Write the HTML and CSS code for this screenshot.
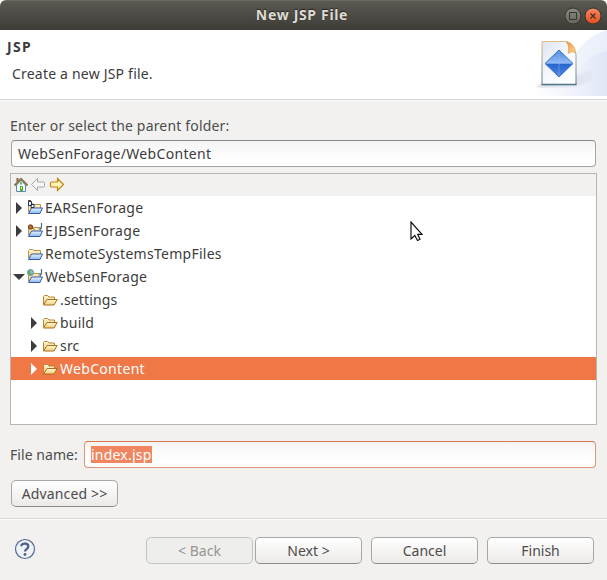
FILE: index.html
```html
<!DOCTYPE html>
<html lang="en">
<head>
<meta charset="utf-8">
<title>New JSP File</title>
<link rel="stylesheet" href="styles.css">
</head>
<body>
<svg class="defs" aria-hidden="true">
  <defs>
    <linearGradient id="yellow" x2="0" y2="1"><stop stop-color="#fff8d8"/><stop offset="1" stop-color="#f3cd75"/></linearGradient>
    <linearGradient id="blue" x2="0" y2="1"><stop stop-color="#eef6ff"/><stop offset="1" stop-color="#83b6ed"/></linearGradient>
    <symbol id="folder" viewBox="0 0 16 16">
      <path d="M1.500 12V4.500l1-1h3L7 5h5.500v3" fill="url(#yellow)" stroke="#b9852f"/>
      <path d="M1.500 13 5 7.500h10.200L12 13z" fill="url(#yellow)" stroke="#aa6f22"/>
    </symbol>
    <symbol id="project" viewBox="0 0 16 16">
      <path d="M1.500 12V4.500l1-1h3L7 4.500h6.500V8" fill="url(#yellow)" stroke="#b9954a"/>
      <path d="M1.500 13.500 4.500 8h11l-2.500 5.500z" fill="url(#blue)" stroke="#3659a8"/>
    </symbol>
    <symbol id="right" viewBox="0 0 6 12"><path d="M0 0l6 6-6 6z" fill="currentColor"/></symbol>
    <symbol id="down" viewBox="0 0 12 6"><path d="M0 0h12L6 6z" fill="currentColor"/></symbol>
  </defs>
</svg>
<main class="window">
  <header class="titlebar">
    <h1 class="title">New JSP File</h1>
    <div class="controls">
      <svg width="36" height="18" viewBox="0 0 36 18">
        <defs><linearGradient id="close" x2="0" y2="1"><stop stop-color="#f68b65"/><stop offset="1" stop-color="#e34d1c"/></linearGradient>
        <linearGradient id="max" x2="0" y2="1"><stop stop-color="#8c8a80"/><stop offset="1" stop-color="#66645b"/></linearGradient></defs>
        <circle cx="8" cy="9" r="8" fill="url(#max)" stroke="#35342f"/>
        <path d="M4.500 5.500h7v7h-7z" fill="none" stroke="#35342f"/>
        <circle cx="28" cy="9" r="8" fill="url(#close)" stroke="#35342f"/>
        <path d="m25.500 6.500 5 5m0-5-5 5" stroke="#4b2d20" stroke-width="1.300"/>
      </svg>
    </div>
  </header>
  <section class="banner">
    <div class="banner-text">
      <h2 class="heading">JSP</h2>
      <p class="description">Create a new JSP file.</p>
    </div>
    <svg class="banner-art" width="77" height="66" viewBox="0 0 77 66">
      <defs>
        <linearGradient id="swoosh"><stop stop-color="#fff"/><stop offset=".55" stop-color="#f1f4fc"/><stop offset="1" stop-color="#e9eefa"/></linearGradient>
        <linearGradient id="wave"><stop stop-color="#fff" stop-opacity=".5"/><stop offset="1" stop-color="#d5def3"/></linearGradient>
        <linearGradient id="page" x2="1" y2="1"><stop stop-color="#dce4f2"/><stop offset=".5" stop-color="#f7f9fd"/><stop offset="1" stop-color="#fff"/></linearGradient>
        <linearGradient id="edge" x2="0" y2="1"><stop stop-color="#e2bd83"/><stop offset="1" stop-color="#527d91"/></linearGradient>
        <linearGradient id="shade"><stop stop-color="#8f88aa" stop-opacity=".5"/><stop offset="1" stop-color="#c9c5df" stop-opacity=".15"/></linearGradient>
        <linearGradient id="curl" x2="1" y2="1"><stop stop-color="#e99734"/><stop offset="1" stop-color="#ffd69a"/></linearGradient>
        <linearGradient id="gem-top" x2="0" y2="1"><stop stop-color="#4f86dc"/><stop offset="1" stop-color="#92bdf6"/></linearGradient>
        <linearGradient id="gem-bottom" x2="0" y2="1"><stop stop-color="#2564cb"/><stop offset="1" stop-color="#4c8ae4"/></linearGradient>
        <filter id="soft"><feGaussianBlur stdDeviation="1.200"/></filter>
      </defs>
      <path d="M77 0C63 4 51 13 43 28 33 45 15 53 2 66h75z" fill="url(#swoosh)"/>
      <path d="M77 21C60 24 52 34 42 47c-7 9-17 14-25 19h60z" fill="url(#wave)" opacity=".5"/>
      <path d="M45 46 62 40v10L45 57H5l8-3h32z" fill="url(#shade)" filter="url(#soft)"/>
      <path d="M12 11.500h24L46 24v30.500H12z" fill="url(#page)" stroke="url(#edge)"/>
      <path d="M11.500 54.500h35" stroke="#4f7886" stroke-width="1.500"/>
      <path d="M36 11.500c6 1 9 6 10 11-3-1-5-1-8 1 1-5 1-9-2-12z" fill="url(#curl)" stroke="#d99649" stroke-width=".6"/>
      <path d="M29 20v13.500H15z" fill="url(#gem-top)"/><path d="m29 20 14 13.500H29z" fill="url(#gem-top)"/>
      <path d="M15 33.500h14V47z" fill="url(#gem-bottom)"/><path d="M29 33.500h14L29 47z" fill="url(#gem-bottom)"/>
      <path d="m29 20 14 13.500L29 47 15 33.500z" fill="none" stroke="#3972ca"/>
      <path d="M29 21v25" stroke="#8db6ef" stroke-width=".5"/>
    </svg>
  </section>
  <section class="content">
    <label class="folder-label"><span class="t-label">Enter or select the parent folder:</span></label>
    <div class="input"><span class="t-path">WebSenForage/WebContent</span></div>
    <div class="tree">
      <div class="toolbar">
        <svg width="50" height="16" viewBox="0 0 50 16">
          <path d="M2.500 8v6.500h9V8L7 3.500z" fill="#f5fbff" stroke="#5788b6"/>
          <path d="M3.500 5V1" stroke="#8a6038" stroke-width="2"/>
          <path d="M.5 8.500 7 2l6.500 6.500" fill="none" stroke="#8a7650" stroke-width="2"/>
          <path d="M6 9h3v5.500H6z" fill="#58a83a"/><path d="M6 5.500h2v2H6z" fill="#62aa43"/><path d="M7 10h1v2H7z" fill="#f4ec60"/>
          <path d="M17.500 7.500 23.500 1.500v3.500h6q1 0 1 1v3q0 1-1 1h-6v3.500z" fill="#f6f6f6" stroke="#a8a8a8"/>
          <path d="M49.500 7.500 43.500 1.500v3.500h-6q-1 0-1 1v3q0 1 1 1h6v3.500z" fill="#fff3b5" stroke="#c58215" stroke-width="1.200"/>
        </svg>
      </div>
      <ul class="rows">
        <li class="row"><span class="twist"><svg class="right"><use href="#right"/></svg></span>
          <svg class="icon" viewBox="0 0 16 16"><use href="#project" width="16" height="16"/><path d="M1.500 1.500h3v4h-3zM4 4.500h3v3H4z" fill="#fff" stroke="#17305f"/><path d="M1 .5h3" stroke="#913e25"/></svg><span class="t-ear">EARSenForage</span></li>
        <li class="row"><span class="twist"><svg class="right"><use href="#right"/></svg></span>
          <svg class="icon" viewBox="0 0 16 16"><use href="#project" width="16" height="16"/><circle cx="3.500" cy="4" r="2.200" fill="#b26a31" stroke="#71401f"/><path d="m5.500 5 2 2" stroke="#71401f"/><path d="M14.500 0v4q0 2-2 2h-1" fill="none" stroke="#43699b" stroke-width="1.200"/></svg><span class="t-ejb">EJBSenForage</span></li>
        <li class="row"><span class="twist"></span><svg class="icon"><use href="#project"/></svg><span class="t-remote">RemoteSystemsTempFiles</span></li>
        <li class="row"><span class="twist"><svg class="down"><use href="#down"/></svg></span>
          <svg class="icon" viewBox="0 0 16 16"><use href="#project" width="16" height="16"/><circle cx="3.500" cy="3.500" r="3" fill="#8fc2d8" stroke="#5a879f"/><path d="M2 1.500h2l-1 2 2 1-2 1.500-2-2z" fill="#63a450"/><path d="M14.500 0v4q0 2-2 2h-1" fill="none" stroke="#43699b" stroke-width="1.200"/></svg><span class="t-web">WebSenForage</span></li>
        <li class="row child"><span class="twist"></span><svg class="icon"><use href="#folder"/></svg><span class="t-settings">.settings</span></li>
        <li class="row child"><span class="twist"><svg class="right"><use href="#right"/></svg></span><svg class="icon"><use href="#folder"/></svg><span class="t-build">build</span></li>
        <li class="row child"><span class="twist"><svg class="right"><use href="#right"/></svg></span><svg class="icon"><use href="#folder"/></svg><span class="t-src">src</span></li>
        <li class="row child selected"><span class="twist"><svg class="right"><use href="#right"/></svg></span><svg class="icon"><use href="#folder"/></svg><span class="t-content">WebContent</span></li>
      </ul>
    </div>
    <div class="file-row">
      <label class="t-file">File name:</label>
      <div class="input focused"><span class="selection t-index">index.jsp</span></div>
    </div>
    <button class="button"><span class="t-advanced">Advanced &gt;&gt;</span></button>
  </section>
  <footer class="footer">
    <svg class="help" width="22" height="22" viewBox="0 0 22 22">
      <circle cx="11" cy="11" r="9.500" fill="#eff2f7" stroke="#536b94" stroke-width="1.200"/>
      <path d="M7.500 8.200V7c1-1.700 6.800-2.200 6.800 1.400 0 2.600-3.300 2.700-3.300 5.100" fill="none" stroke="#4b6088" stroke-width="2.200"/>
      <circle cx="11" cy="16.500" r="1.400" fill="#4b6088"/>
    </svg>
    <button class="button back" disabled>&lt; Back</button>
    <button class="button next">Next &gt;</button>
    <button class="button cancel">Cancel</button>
    <button class="button finish">Finish</button>
  </footer>
</main>
<svg class="cursor" width="14" height="21" viewBox="0 0 14 21"><path d="M1 1v17l3.800-3.500 2.700 5 2.500-1.200-2.300-5H12z" fill="#fff" stroke="#111" stroke-width="1.200"/></svg>
</body>
</html>
```

FILE: styles.css
```css
* { box-sizing: border-box; }
html, body { margin: 0; background: #fff; }
body { width: 607px; height: 580px; overflow: hidden; font: 14px/20px "Noto Sans", "Open Sans", sans-serif; color: #3c3c3c; }
h1, h2, p, ul { margin: 0; padding: 0; }
svg { display: block; flex: none; }
span, label { white-space: nowrap; }
.defs { position: absolute; width: 0; height: 0; }
.window { display: flex; flex-direction: column; height: 580px; background: #f2f1f0; border-radius: 6px 6px 0 0; overflow: hidden; }
.titlebar { display: grid; grid-template-columns: 47px 1fr 50px; align-items: center; height: 30px; background: linear-gradient(#5b5952, #3d3c37); border-top: 1px solid #6b6962; }
.title { grid-column: 2; padding-bottom: 2px; text-align: center; font-size: 14px; line-height: 20px; font-weight: 700; letter-spacing: .68px; color: #dfdbd2; text-shadow: 0 -1px 1px #24231f; }
.controls { padding-left: 8px; }
.banner { display: flex; justify-content: space-between; height: 71px; background: #fff; border-bottom: 1px solid #fbfbfb; box-shadow: inset 0 -1px #d5d5d5; }
.banner-text { padding: 7px 0 0 7px; }
.heading { font-size: 14px; line-height: 20px; font-weight: 700; letter-spacing: 1.3px; }
.description { padding: 7px 0 0 5px; letter-spacing: .2px; }
.content { display: flex; flex-direction: column; align-items: flex-start; height: 417px; padding: 15px 10px 0; }
.folder-label { height: 24px; }
.folder-label, .t-file { color: #4c4c4c; }
.t-label { letter-spacing: .17px; }
.t-path, .t-content { letter-spacing: .31px; }
.t-ear, .t-web { letter-spacing: .26px; }
.t-ejb { letter-spacing: .34px; }
.t-remote { letter-spacing: .27px; }
.t-settings { letter-spacing: .16px; }
.t-build, .t-src { letter-spacing: .2px; }
.t-index { letter-spacing: .22px; }
.t-advanced { letter-spacing: .15px; }
.t-file { letter-spacing: .06px; }
.input { width: 585px; height: 27px; margin-left: 1px; padding: 3px 6px; border: 1px solid #a6a5a2; border-top-color: #8b8a88; border-radius: 4px; background: linear-gradient(#f4f4f4, #fff 70%); line-height: 19px; }
.tree { width: 587px; height: 252px; margin-top: 6px; border: 1px solid #b8b6b3; background: #fff; }
.toolbar { height: 22px; padding: 3px 0 0 3px; background: #f2f1f0; }
.rows { list-style: none; }
.row { display: flex; align-items: center; height: 23px; padding-left: 2px; line-height: 23px; }
.child { padding-left: 17px; }
.twist { display: flex; align-items: center; justify-content: center; width: 12px; margin-right: 2px; }
.right { width: 6px; height: 12px; }
.down { width: 12px; height: 6px; }
.icon { width: 16px; height: 16px; margin-right: 2px; overflow: visible; }
.selected { color: #fff; background: #f07746; }
.file-row { display: flex; align-items: center; height: 27px; margin-top: 16px; }
.file-row label { width: 73px; }
.file-row .input { width: 512px; }
.focused { border-color: #e09578; border-top-color: #d8754d; padding-left: 6px; }
.selection { display: inline-block; height: 17px; line-height: 17px; margin-top: 1px; background: #f08660; color: #fff; }
.button { display: block; width: 107px; height: 27px; padding: 0; border: 1px solid #a9a7a4; border-bottom-color: #8c8b88; border-radius: 5px; background: linear-gradient(#fff, #eceae8); box-shadow: inset 0 1px #fff; color: #4c4c4c; font: inherit; line-height: 25px; }
.content > .button { margin: 12px 0 0 1px; }
.footer { display: flex; height: 62px; padding: 18px 0 0 14px; border-top: 1px solid #d9d8d6; box-shadow: inset 0 1px #fbfbfb; }
.help { margin-top: 1px; }
.back { margin-left: 110px; }
.button:disabled { color: #979590; background: #eeeeed; border-color: #c4c4c2; box-shadow: none; }
.next { margin-left: 2px; }
.cancel, .finish { margin-left: 9px; }
.cursor { position: absolute; left: 410px; top: 221px; }
```
